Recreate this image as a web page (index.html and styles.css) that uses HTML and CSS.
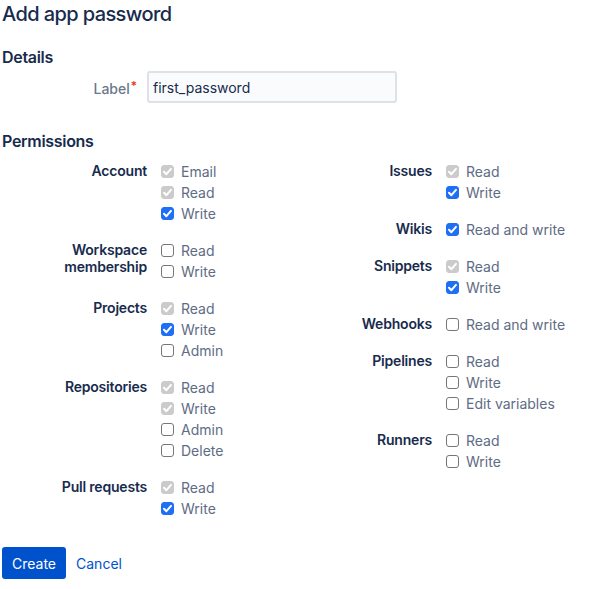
FILE: index.html
```html
<!DOCTYPE html>
<html lang="en">
<head>
<meta charset="utf-8">
<title>Add app password</title>
<link rel="stylesheet" href="styles.css">
</head>
<body>
<main class="page">
  <h1 class="title">Add app password</h1>
  <h2 class="section">Details</h2>
  <div class="field-row">
    <label class="field-label" for="label">Label<span class="req">*</span></label>
    <input id="label" class="text-input" type="text" value="first_password">
  </div>
  <h2 class="section section-perm">Permissions</h2>
  <div class="perm-grid">
    <div class="perm-col">
      <div class="group">
        <div class="group-label">Account</div>
        <div class="options">
          <div class="opt"><span class="cb cb-dis"><svg viewBox="0 0 13 13"><path d="M3 6.8 5.4 9.2 10 3.9"/></svg></span>Email</div>
          <div class="opt"><span class="cb cb-dis"><svg viewBox="0 0 13 13"><path d="M3 6.8 5.4 9.2 10 3.9"/></svg></span>Read</div>
          <div class="opt"><span class="cb cb-on"><svg viewBox="0 0 13 13"><path d="M3 6.8 5.4 9.2 10 3.9"/></svg></span>Write</div>
        </div>
      </div>
      <div class="group">
        <div class="group-label">Workspace membership</div>
        <div class="options">
          <div class="opt"><span class="cb"></span>Read</div>
          <div class="opt"><span class="cb"></span>Write</div>
        </div>
      </div>
      <div class="group">
        <div class="group-label">Projects</div>
        <div class="options">
          <div class="opt"><span class="cb cb-dis"><svg viewBox="0 0 13 13"><path d="M3 6.8 5.4 9.2 10 3.9"/></svg></span>Read</div>
          <div class="opt"><span class="cb cb-on"><svg viewBox="0 0 13 13"><path d="M3 6.8 5.4 9.2 10 3.9"/></svg></span>Write</div>
          <div class="opt"><span class="cb"></span>Admin</div>
        </div>
      </div>
      <div class="group">
        <div class="group-label">Repositories</div>
        <div class="options">
          <div class="opt"><span class="cb cb-dis"><svg viewBox="0 0 13 13"><path d="M3 6.8 5.4 9.2 10 3.9"/></svg></span>Read</div>
          <div class="opt"><span class="cb cb-dis"><svg viewBox="0 0 13 13"><path d="M3 6.8 5.4 9.2 10 3.9"/></svg></span>Write</div>
          <div class="opt"><span class="cb"></span>Admin</div>
          <div class="opt"><span class="cb"></span>Delete</div>
        </div>
      </div>
      <div class="group">
        <div class="group-label">Pull requests</div>
        <div class="options">
          <div class="opt"><span class="cb cb-dis"><svg viewBox="0 0 13 13"><path d="M3 6.8 5.4 9.2 10 3.9"/></svg></span>Read</div>
          <div class="opt"><span class="cb cb-on"><svg viewBox="0 0 13 13"><path d="M3 6.8 5.4 9.2 10 3.9"/></svg></span>Write</div>
        </div>
      </div>
    </div>
    <div class="perm-col">
      <div class="group">
        <div class="group-label">Issues</div>
        <div class="options">
          <div class="opt"><span class="cb cb-dis"><svg viewBox="0 0 13 13"><path d="M3 6.8 5.4 9.2 10 3.9"/></svg></span>Read</div>
          <div class="opt"><span class="cb cb-on"><svg viewBox="0 0 13 13"><path d="M3 6.8 5.4 9.2 10 3.9"/></svg></span>Write</div>
        </div>
      </div>
      <div class="group">
        <div class="group-label">Wikis</div>
        <div class="options">
          <div class="opt"><span class="cb cb-on"><svg viewBox="0 0 13 13"><path d="M3 6.8 5.4 9.2 10 3.9"/></svg></span>Read and write</div>
        </div>
      </div>
      <div class="group">
        <div class="group-label">Snippets</div>
        <div class="options">
          <div class="opt"><span class="cb cb-dis"><svg viewBox="0 0 13 13"><path d="M3 6.8 5.4 9.2 10 3.9"/></svg></span>Read</div>
          <div class="opt"><span class="cb cb-on"><svg viewBox="0 0 13 13"><path d="M3 6.8 5.4 9.2 10 3.9"/></svg></span>Write</div>
        </div>
      </div>
      <div class="group">
        <div class="group-label">Webhooks</div>
        <div class="options">
          <div class="opt"><span class="cb"></span>Read and write</div>
        </div>
      </div>
      <div class="group">
        <div class="group-label">Pipelines</div>
        <div class="options">
          <div class="opt"><span class="cb"></span>Read</div>
          <div class="opt"><span class="cb"></span>Write</div>
          <div class="opt"><span class="cb"></span>Edit variables</div>
        </div>
      </div>
      <div class="group">
        <div class="group-label">Runners</div>
        <div class="options">
          <div class="opt"><span class="cb"></span>Read</div>
          <div class="opt"><span class="cb"></span>Write</div>
        </div>
      </div>
    </div>
  </div>
  <div class="actions">
    <button class="btn-primary" type="button">Create</button>
    <a class="link" href="#">Cancel</a>
  </div>
</main>
</body>
</html>
```

FILE: styles.css
```css
* { box-sizing: border-box; }
html, body { margin: 0; padding: 0; background: #fff; }
body {
  font-family: Inter, "Noto Sans", "Liberation Sans", sans-serif;
  font-size: 14px;
  color: #172B4D;
}
.page { padding: 2px 2px 0 2px; }
.title {
  margin: 0;
  font-size: 20px;
  line-height: 24px;
  font-weight: 500;
  letter-spacing: -0.6px;
}
.section {
  margin: 21px 0 0 0;
  font-size: 16px;
  line-height: 20px;
  font-weight: 600;
  letter-spacing: -0.3px;
}
.section-perm { margin-top: 28px; }
.field-row {
  display: flex;
  align-items: center;
  margin-top: 4px;
}
.field-label {
  width: 145px;
  padding-right: 10px;
  text-align: right;
  color: #6B778C;
  font-weight: 500;
}
.req { color: #DE350B; font-size: 12px; vertical-align: 4px; margin-left: 1px; }
.text-input {
  width: 250px;
  height: 32px;
  border: 2px solid #DFE1E6;
  border-radius: 3px;
  background: #FAFBFC;
  padding: 0 4px;
  font: inherit;
  color: #172B4D;
  outline: none;
}
.perm-grid {
  display: grid;
  grid-template-columns: 285px 285px;
  margin-top: 10px;
}
.perm-col { display: flex; flex-direction: column; gap: 16px; }
.group {
  display: grid;
  grid-template-columns: 145px 1fr;
  column-gap: 14px;
}
.group-label {
  text-align: right;
  font-weight: 600;
  line-height: 17px;
  padding-top: 1px;
  letter-spacing: -0.2px;
}
.options { display: flex; flex-direction: column; }
.opt {
  display: flex;
  align-items: center;
  height: 21px;
  color: #5E6C84;
  white-space: nowrap;
}
.cb {
  width: 13px;
  height: 13px;
  border: 1px solid #767676;
  border-radius: 3px;
  background: #fff;
  margin-right: 7px;
  flex: none;
  display: flex;
}
.cb svg { width: 13px; height: 13px; margin: -1px; }
.cb path { fill: none; stroke: #fff; stroke-width: 2; stroke-linecap: round; stroke-linejoin: round; }
.cb-on { background: #1F6FF5; border-color: #1F6FF5; }
.cb-dis { background: #CBCBCB; border-color: #CBCBCB; }
.actions {
  display: flex;
  align-items: center;
  gap: 10px;
  margin-top: 28px;
}
.btn-primary {
  height: 32px;
  padding: 0 10px;
  border: none;
  border-radius: 3px;
  background: #0052CC;
  color: #fff;
  font: inherit;
  font-weight: 400;
}
.link { color: #0052CC; text-decoration: none; }
```
